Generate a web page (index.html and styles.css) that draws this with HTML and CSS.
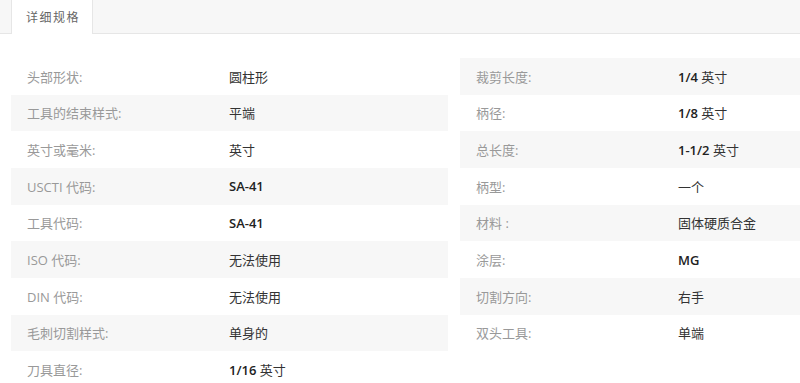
FILE: index.html
```html
<!DOCTYPE html>
<html lang="zh">
<head>
<meta charset="utf-8">
<link rel="stylesheet" href="styles.css">
</head>
<body>
<div class="tabs">
  <div class="tab active">详细规格</div>
</div>
<div class="specs">
  <div class="col left">
    <div class="row"><span class="label">头部形状:</span><span class="value">圆柱形</span></div>
    <div class="row"><span class="label">工具的结束样式:</span><span class="value">平端</span></div>
    <div class="row"><span class="label">英寸或毫米:</span><span class="value">英寸</span></div>
    <div class="row"><span class="label">USCTI 代码:</span><span class="value"><b>SA-41</b></span></div>
    <div class="row"><span class="label">工具代码:</span><span class="value"><b>SA-41</b></span></div>
    <div class="row"><span class="label">ISO 代码:</span><span class="value">无法使用</span></div>
    <div class="row"><span class="label">DIN 代码:</span><span class="value">无法使用</span></div>
    <div class="row"><span class="label">毛刺切割样式:</span><span class="value">单身的</span></div>
    <div class="row"><span class="label">刀具直径:</span><span class="value"><b>1/16</b> 英寸</span></div>
  </div>
  <div class="col right">
    <div class="row"><span class="label">裁剪长度:</span><span class="value"><b>1/4</b> 英寸</span></div>
    <div class="row"><span class="label">柄径:</span><span class="value"><b>1/8</b> 英寸</span></div>
    <div class="row"><span class="label">总长度:</span><span class="value"><b>1-1/2</b> 英寸</span></div>
    <div class="row"><span class="label">柄型:</span><span class="value">一个</span></div>
    <div class="row"><span class="label">材料 :</span><span class="value">固体硬质合金</span></div>
    <div class="row"><span class="label">涂层:</span><span class="value"><b>MG</b></span></div>
    <div class="row"><span class="label">切割方向:</span><span class="value">右手</span></div>
    <div class="row"><span class="label">双头工具:</span><span class="value">单端</span></div>
  </div>
</div>
</body>
</html>
```
FILE: styles.css
```css
html, body {
  margin: 0;
  padding: 0;
  background: #fff;
  overflow: hidden;
  width: 800px;
  height: 383px;
}
body {
  font-family: "Open Sans", "Noto Sans CJK SC", sans-serif;
  font-size: 13px;
}
.tabs {
  display: flex;
  height: 33px;
  background: #f7f7f7;
  border-bottom: 1px solid #e6e6e6;
  padding-left: 11px;
}
.tab {
  display: flex;
  align-items: center;
  padding: 0 0 0 14px;
  width: 82px;
  box-sizing: border-box;
  white-space: nowrap;
  font-size: 12px;
  letter-spacing: 1.5px;
  color: #666;
}
.tab.active {
  background: #fff;
  border-left: 1px solid #e6e6e6;
  border-right: 1px solid #e6e6e6;
  height: 34px;
  margin-bottom: -1px;
}
.specs {
  display: grid;
  grid-template-columns: 437px 1fr;
  column-gap: 12px;
  padding: 24px 0 0 11px;
}
.row {
  display: flex;
  align-items: center;
  height: 36.67px;
  padding-left: 16px;
  white-space: nowrap;
}
.left .row:nth-child(even),
.right .row:nth-child(odd) {
  background: #f7f7f7;
}
.label {
  width: 202px;
  color: #999;
}
.value {
  color: #333;
}
.value b {
  font-weight: 600;
  color: #222;
}
```
